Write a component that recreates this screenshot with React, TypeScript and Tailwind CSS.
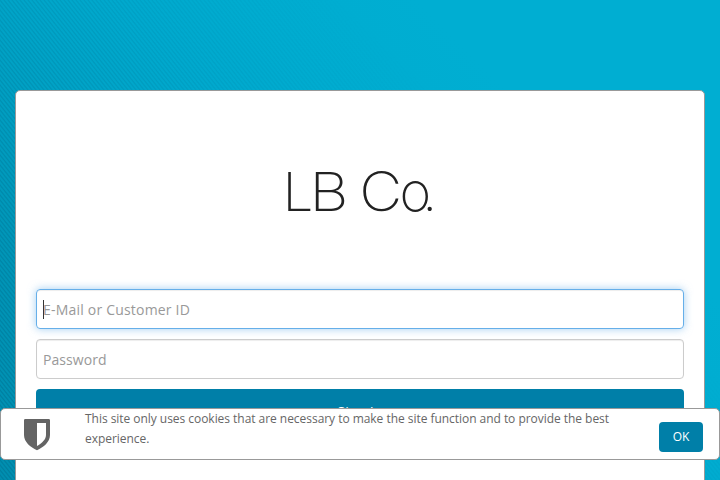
import React from "react";

function Logo() {
  return (
    <svg width="160" height="80" viewBox="280 152 160 80" className="block" role="img" aria-label="LB Co.">
      <g fill="#222222" fontFamily="Inter, sans-serif" fontWeight="200" fontSize="54">
        <text y="211" x="282.5" textLength="31" lengthAdjust="spacingAndGlyphs">L</text>
        <text y="211" x="309.5" textLength="39" lengthAdjust="spacingAndGlyphs">B</text>
        <text y="211" x="359.3" textLength="43" lengthAdjust="spacingAndGlyphs">C</text>
        <text y="211" x="399.5">o</text>
        <text y="211" x="422.3">.</text>
      </g>
    </svg>
  );
}

function ShieldIcon() {
  return (
    <svg width="26" height="32" viewBox="0 0 26 32" className="block">
      <path
        fill="#646464"
        fillRule="evenodd"
        d="M1.3 0H24.7Q26 0 26 1.3V16C26 23 19.5 28.3 13 31.2C6.5 28.3 0 23 0 16V1.3Q0 0 1.3 0ZM13 4V27C18 24.3 22 20.3 22 16V4Z"
      />
    </svg>
  );
}

export default function App() {
  return (
    <div className="relative flex h-[480px] w-[720px] overflow-hidden bg-[#00aed2] bg-[linear-gradient(45deg,#008eb0_0%,#0096b8_20%,#00a4c8_40%,#00a9ce_50%,#00acd0_60%,#00aed2_75%)] px-[15px] pt-[90px] font-['Open_Sans',sans-serif]">
      <svg className="absolute inset-0" width="720" height="480">
        <defs>
          <pattern id="weave" width="4" height="5" patternUnits="userSpaceOnUse">
            <path d="M-4 -5L8 10M0 -5L12 10M-8 -5L4 10" stroke="#00708f" strokeWidth="1.2" />
          </pattern>
          <linearGradient id="fade" gradientUnits="userSpaceOnUse" x1="0" y1="400" x2="370" y2="30">
            <stop offset="0" stopColor="white" stopOpacity="0.5" />
            <stop offset="0.5" stopColor="white" stopOpacity="0.25" />
            <stop offset="1" stopColor="white" stopOpacity="0" />
          </linearGradient>
          <mask id="stripes">
            <rect width="720" height="480" fill="url(#fade)" />
          </mask>
        </defs>
        <rect width="720" height="480" fill="url(#weave)" mask="url(#stripes)" />
      </svg>

      <main className="relative h-[420px] w-full rounded-[5px] border border-[#999] bg-white px-5">
        <div className="flex h-[198px] items-center justify-center pt-[3px]">
          <Logo />
        </div>
        <form className="flex flex-col gap-2.5">
          <div className="flex h-10 items-center rounded border border-[#66afe9] px-1.5 text-sm text-[#999] shadow-[inset_0_1px_1px_rgba(0,0,0,0.075),0_0_8px_rgba(102,175,233,0.6)]">
            <span className="h-[19px] w-px bg-[#333]" />
            <span className="-ml-px pt-0.5 tracking-[0.2px]">E-Mail or Customer ID</span>
          </div>
          <div className="flex h-10 items-center rounded border border-[#ccc] px-1.5 pt-0.5 text-sm tracking-[0.06px] text-[#999] shadow-[inset_0_1px_1px_rgba(0,0,0,0.075)]">
            Password
          </div>
          <button type="button" className="h-[45px] rounded bg-[#007fa8] text-sm tracking-[0.3px] text-white">
            Sign In
          </button>
        </form>
      </main>

      <aside className="absolute bottom-5 left-0 flex h-[52px] w-full rounded-[5px] border border-[#999] bg-white pr-4 pl-[23px]">
        <div className="w-[61px] shrink-0 pt-2.5">
          <ShieldIcon />
        </div>
        <p className="w-[550px] text-xs leading-5 tracking-[-0.04px] text-[#666]">
          This site only uses cookies that are necessary to make the site function and to provide the best experience.
        </p>
        <button type="button" className="mt-[13px] ml-auto h-[30px] w-11 shrink-0 rounded bg-[#007fa8] text-xs text-white">
          OK
        </button>
      </aside>
    </div>
  );
}
